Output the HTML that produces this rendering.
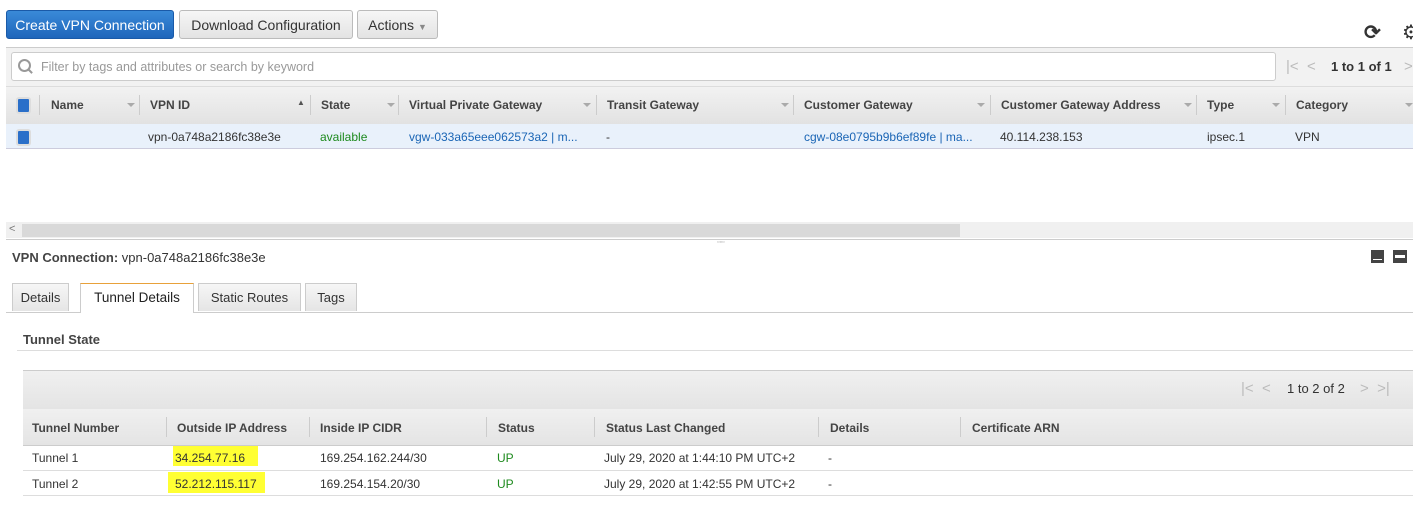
<!DOCTYPE html><html><head><style>
body{margin:0;width:1413px;height:509px;overflow:hidden;background:#fff;font-family:"Liberation Sans",Arial,sans-serif;font-size:12px;color:#333;position:relative}
.a{position:absolute;white-space:nowrap}
.btn{position:absolute;top:10px;height:29px;border:1px solid #bbb;border-radius:3px;background:linear-gradient(#f6f6f6,#e3e3e3);font-size:14px;line-height:29px;text-align:center;color:#333;box-sizing:border-box}
.th{position:absolute;font-weight:bold;font-size:12px;color:#444}
.sep{position:absolute;width:1px;background:#ccc}
.car{position:absolute;width:0;height:0;border-left:4px solid transparent;border-right:4px solid transparent;border-top:4px solid #aaa}
.cb{position:absolute;width:11px;height:13px;background:#2a6fc9;border:2px solid #ddd;border-radius:3px}
.lnk{color:#1a65b5}
.hl{background:#ffff33}
.tab{position:absolute;top:283px;height:28px;border:1px solid #ccc;border-bottom:0;background:linear-gradient(#f6f6f6,#e5e5e5);text-align:center;line-height:28px;font-size:13px;box-sizing:border-box}
</style></head><body>
<div class="btn" style="left:6px;width:168px;background:linear-gradient(#3a8ad8,#1f66bb);border-color:#1a5aa8;color:#fff">Create VPN Connection</div>
<div class="btn" style="left:179px;width:174px">Download Configuration</div>
<div class="btn" style="left:357px;width:81px">Actions <span style="font-size:9px;color:#888">▼</span></div>
<div class="a" style="left:1364px;top:20px;font-size:20px;font-weight:bold;color:#333">⟳</div>
<div class="a" style="left:1402px;top:20px;font-size:20px;color:#333">⚙</div>
<div class="a" style="left:6px;top:47px;width:1407px;height:39px;background:#f2f2f2;border-top:1px solid #ccc"></div>
<div class="a" style="left:11px;top:52px;width:1263px;height:27px;background:#fff;border:1px solid #ccc;border-radius:3px"></div>
<div class="a" style="left:18px;top:59px;width:9px;height:9px;border:2px solid #999;border-radius:50%"></div>
<div class="a" style="left:27px;top:70px;width:6px;height:2px;background:#999;transform:rotate(45deg)"></div>
<div class="a" style="left:41px;top:60px;color:#999;font-size:12.5px">Filter by tags and attributes or search by keyword</div>
<div class="a" style="left:1286px;top:58px;font-size:15px;color:#bbb">|&lt; &nbsp;&lt;</div>
<div class="a" style="left:1331px;top:59px;font-size:13px;font-weight:bold;color:#333">1 to 1 of 1</div>
<div class="a" style="left:1404px;top:58px;font-size:15px;color:#bbb">&gt;</div>
<div class="a" style="left:6px;top:86px;width:1407px;height:37px;background:linear-gradient(#f2f2f2,#e2e2e2);border-top:1px solid #ddd;border-bottom:1px solid #ccc"></div>
<div class="cb" style="left:16px;top:97px"></div>
<div class="sep" style="left:39px;top:95px;height:20px"></div>
<div class="th" style="left:51px;top:98px">Name</div><div class="car" style="left:127px;top:103px"></div>
<div class="sep" style="left:139px;top:95px;height:20px"></div>
<div class="th" style="left:150px;top:98px">VPN ID</div><div class="a" style="left:297px;top:98px;font-size:8px;color:#555">▲</div>
<div class="sep" style="left:310px;top:95px;height:20px"></div>
<div class="th" style="left:321px;top:98px">State</div><div class="car" style="left:387px;top:103px"></div>
<div class="sep" style="left:398px;top:95px;height:20px"></div>
<div class="th" style="left:409px;top:98px">Virtual Private Gateway</div><div class="car" style="left:583px;top:103px"></div>
<div class="sep" style="left:596px;top:95px;height:20px"></div>
<div class="th" style="left:607px;top:98px">Transit Gateway</div><div class="car" style="left:781px;top:103px"></div>
<div class="sep" style="left:793px;top:95px;height:20px"></div>
<div class="th" style="left:804px;top:98px">Customer Gateway</div><div class="car" style="left:977px;top:103px"></div>
<div class="sep" style="left:990px;top:95px;height:20px"></div>
<div class="th" style="left:1001px;top:98px">Customer Gateway Address</div><div class="car" style="left:1184px;top:103px"></div>
<div class="sep" style="left:1196px;top:95px;height:20px"></div>
<div class="th" style="left:1207px;top:98px">Type</div><div class="car" style="left:1272px;top:103px"></div>
<div class="sep" style="left:1285px;top:95px;height:20px"></div>
<div class="th" style="left:1296px;top:98px">Category</div><div class="car" style="left:1405px;top:103px"></div>
<div class="a" style="left:6px;top:124px;width:1407px;height:24px;background:#e9f1fb;border-bottom:1px solid #ccd"></div>
<div class="cb" style="left:16px;top:129px"></div>
<div class="a" style="left:148px;top:130px">vpn-0a748a2186fc38e3e</div>
<div class="a" style="left:320px;top:130px;color:#1d8a1d">available</div>
<div class="a lnk" style="left:409px;top:130px">vgw-033a65eee062573a2 | m...</div>
<div class="a" style="left:606px;top:130px">-</div>
<div class="a lnk" style="left:804px;top:130px">cgw-08e0795b9b6ef89fe | ma...</div>
<div class="a" style="left:1000px;top:130px">40.114.238.153</div>
<div class="a" style="left:1207px;top:130px">ipsec.1</div>
<div class="a" style="left:1295px;top:130px">VPN</div>
<div class="a" style="left:6px;top:222px;width:1407px;height:16px;background:#f0f0f0"></div>
<div class="a" style="left:22px;top:224px;width:938px;height:13px;background:#d9d9d9"></div>
<div class="a" style="left:9px;top:223px;color:#777;font-size:11px">&lt;</div>
<div class="a" style="left:6px;top:239px;width:1407px;height:1px;background:#ccc"></div>
<div class="a" style="left:717px;top:239px;font-size:7px;color:#aaa">▫▫▫</div>
<div class="a" style="left:12px;top:250px;font-size:13px"><b style="color:#444">VPN Connection:</b> vpn-0a748a2186fc38e3e</div>
<div class="a" style="left:1371px;top:250px;width:13px;height:13px;background:#444"></div><div class="a" style="left:1373px;top:259px;width:9px;height:1px;background:#fff"></div>
<div class="a" style="left:1393px;top:250px;width:14px;height:13px;background:#444"></div><div class="a" style="left:1395px;top:255px;width:10px;height:3px;background:#fff"></div>
<div class="a" style="left:6px;top:312px;width:1407px;height:1px;background:#ccc"></div>
<div class="tab" style="left:12px;width:57px">Details</div>
<div class="tab" style="left:80px;width:114px;height:30px;background:#fff;border-top:1px solid #e8a13a;color:#222;font-size:13.5px">Tunnel Details</div>
<div class="tab" style="left:198px;width:103px">Static Routes</div>
<div class="tab" style="left:305px;width:52px">Tags</div>
<div class="a" style="left:23px;top:332px;font-size:13px;font-weight:bold;color:#444">Tunnel State</div>
<div class="a" style="left:17px;top:350px;width:1396px;height:1px;background:#ddd"></div>
<div class="a" style="left:23px;top:370px;width:1390px;height:38px;background:linear-gradient(#f0f0f0,#e4e4e4);border-top:1px solid #ccc;border-bottom:1px solid #d5d5d5"></div>
<div class="a" style="left:1241px;top:380px;font-size:15px;color:#bbb">|&lt; &nbsp;&lt;</div>
<div class="a" style="left:1287px;top:381px;font-size:13px;color:#333">1 to 2 of 2</div>
<div class="a" style="left:1360px;top:380px;font-size:15px;color:#bbb">&gt; &nbsp;&gt;|</div>
<div class="a" style="left:23px;top:409px;width:1390px;height:36px;background:linear-gradient(#f0f0f0,#e4e4e4);border-bottom:1px solid #ccc"></div>
<div class="th" style="left:32px;top:421px">Tunnel Number</div>
<div class="sep" style="left:166px;top:417px;height:20px"></div>
<div class="th" style="left:177px;top:421px">Outside IP Address</div>
<div class="sep" style="left:309px;top:417px;height:20px"></div>
<div class="th" style="left:320px;top:421px">Inside IP CIDR</div>
<div class="sep" style="left:486px;top:417px;height:20px"></div>
<div class="th" style="left:498px;top:421px">Status</div>
<div class="sep" style="left:594px;top:417px;height:20px"></div>
<div class="th" style="left:606px;top:421px">Status Last Changed</div>
<div class="sep" style="left:818px;top:417px;height:20px"></div>
<div class="th" style="left:830px;top:421px">Details</div>
<div class="sep" style="left:960px;top:417px;height:20px"></div>
<div class="th" style="left:972px;top:421px">Certificate ARN</div>
<div class="a" style="left:23px;top:470px;width:1390px;height:1px;background:#ddd"></div>
<div class="a" style="left:23px;top:495px;width:1390px;height:1px;background:#ddd"></div>
<div class="a" style="left:32px;top:451px">Tunnel 1</div>
<div class="a hl" style="left:173px;top:446px;width:85px;height:20px"></div>
<div class="a" style="left:175px;top:451px">34.254.77.16</div>
<div class="a" style="left:320px;top:451px">169.254.162.244/30</div>
<div class="a" style="left:497px;top:451px;color:#1d8a1d">UP</div>
<div class="a" style="left:604px;top:451px">July 29, 2020 at 1:44:10 PM UTC+2</div>
<div class="a" style="left:828px;top:451px">-</div>
<div class="a" style="left:32px;top:477px">Tunnel 2</div>
<div class="a hl" style="left:168px;top:472px;width:97px;height:21px"></div>
<div class="a" style="left:175px;top:477px">52.212.115.117</div>
<div class="a" style="left:320px;top:477px">169.254.154.20/30</div>
<div class="a" style="left:497px;top:477px;color:#1d8a1d">UP</div>
<div class="a" style="left:604px;top:477px">July 29, 2020 at 1:42:55 PM UTC+2</div>
<div class="a" style="left:828px;top:477px">-</div>
</body></html>
